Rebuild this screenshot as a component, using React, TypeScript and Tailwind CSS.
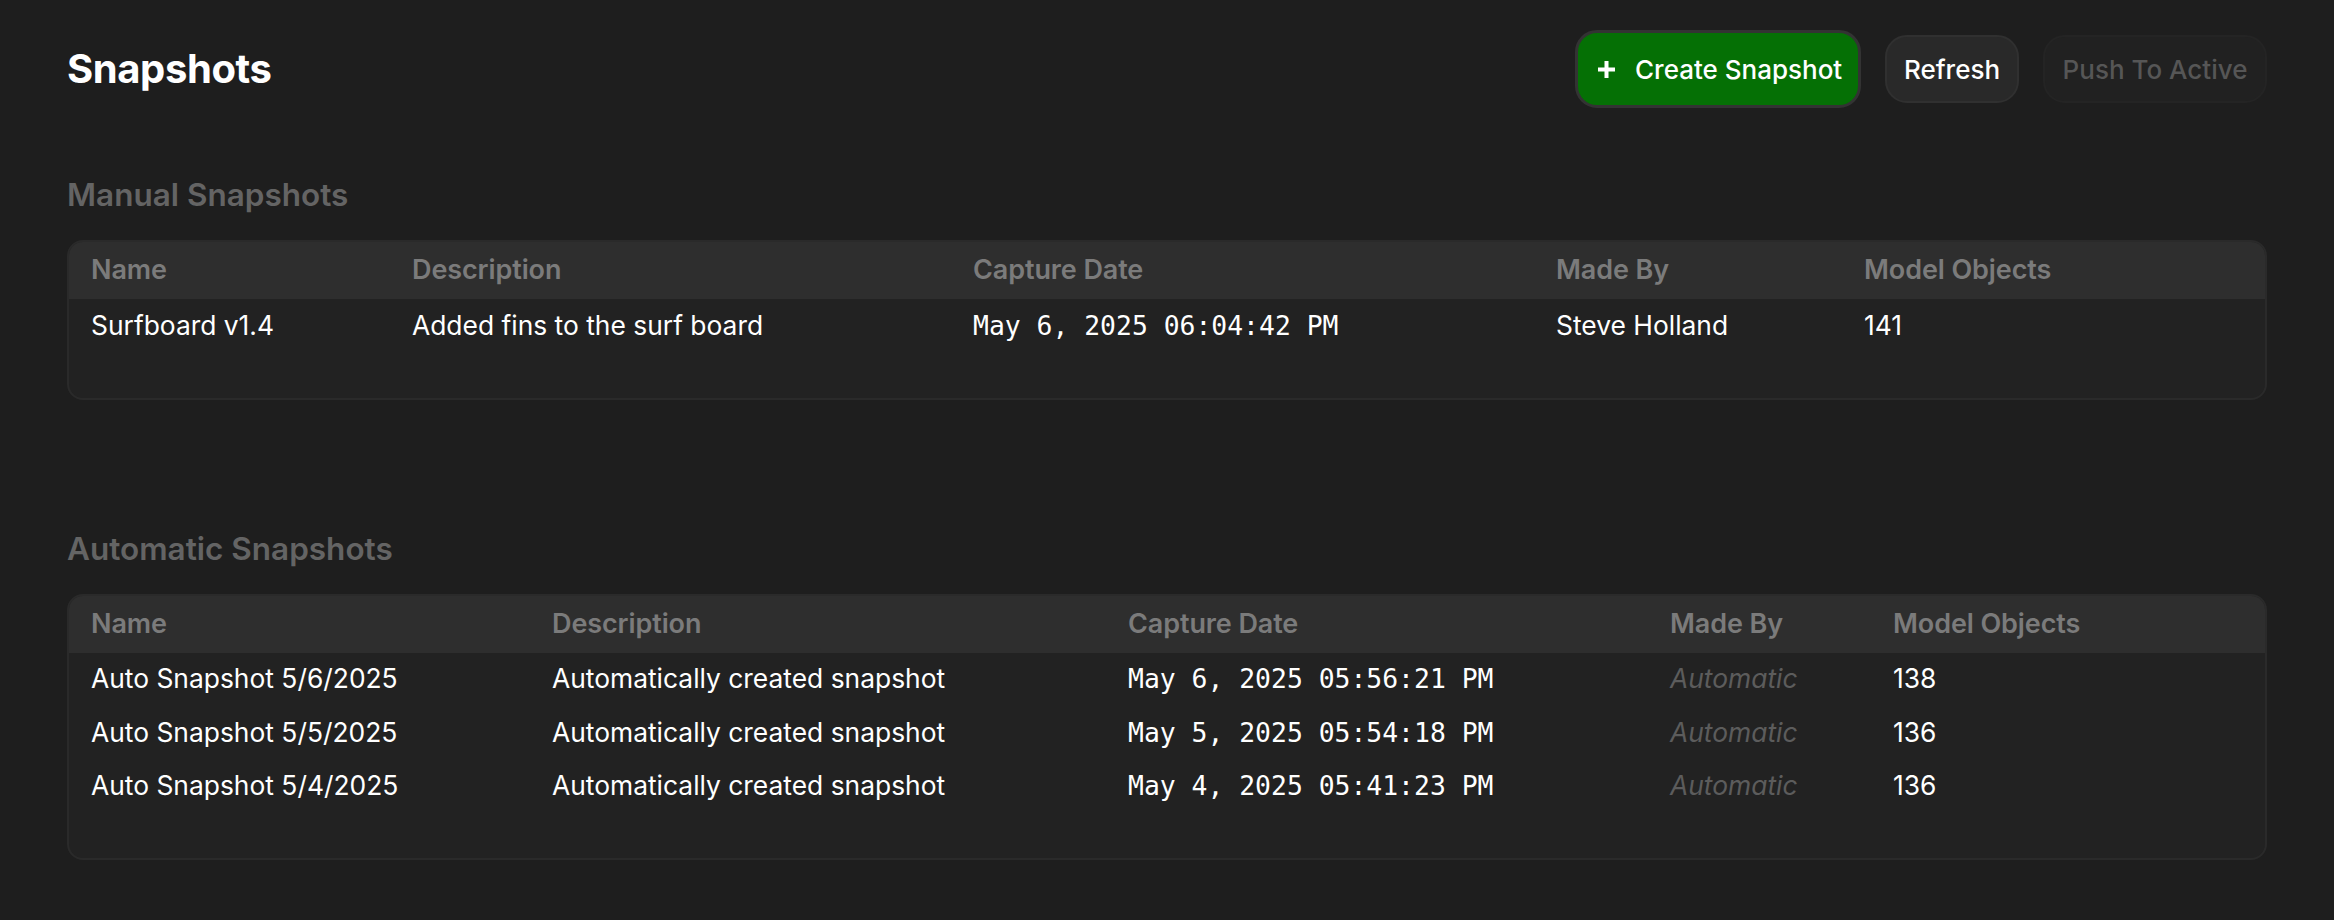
import React from "react";

type Row = { name: string; desc: string; date: string; by: string; auto?: boolean; count: string };

const manual: Row[] = [
  { name: "Surfboard v1.4", desc: "Added fins to the surf board", date: "May 6, 2025 06:04:42 PM", by: "Steve Holland", count: "141" },
];

const automatic: Row[] = [
  { name: "Auto Snapshot 5/6/2025", desc: "Automatically created snapshot", date: "May 6, 2025 05:56:21 PM", by: "Automatic", auto: true, count: "138" },
  { name: "Auto Snapshot 5/5/2025", desc: "Automatically created snapshot", date: "May 5, 2025 05:54:18 PM", by: "Automatic", auto: true, count: "136" },
  { name: "Auto Snapshot 5/4/2025", desc: "Automatically created snapshot", date: "May 4, 2025 05:41:23 PM", by: "Automatic", auto: true, count: "136" },
];

function SnapTable({ rows, widths }: { rows: Row[]; widths: number[] }) {
  return (
    <div className="rounded-[16px] border-2 border-[#2a2a2a] bg-[#222222] overflow-hidden pb-[45px]">
      <table className="w-full table-fixed border-collapse">
        <colgroup>
          {widths.map((w, i) => (
            <col key={i} style={{ width: w }} />
          ))}
          <col />
        </colgroup>
        <thead>
          <tr className="bg-[#2e2e2e] h-[57px]">
            {["Name", "Description", "Capture Date", "Made By", "Model Objects"].map((h) => (
              <th key={h} className="text-left pl-[22px] text-[27px] font-semibold text-[#7b7b7b] tracking-[-0.1px]">
                {h}
              </th>
            ))}
          </tr>
        </thead>
        <tbody>
          {rows.map((r) => (
            <tr key={r.name} className="h-[53.5px] text-[26.4px] text-white">
              <td className="pl-[22px]">{r.name}</td>
              <td className="pl-[22px]">{r.desc}</td>
              <td className="pl-[22px] font-['DejaVu_Sans_Mono',monospace] text-[26.4px]">{r.date}</td>
              <td className={r.auto ? "pl-[22px] italic text-[#5c5c5c]" : "pl-[22px]"}>{r.by}</td>
              <td className="pl-[22px]">{r.count}</td>
            </tr>
          ))}
        </tbody>
      </table>
    </div>
  );
}

export default function App() {
  return (
    <div className="min-h-[920px] w-full bg-[#1e1e1e] font-['Inter',sans-serif] px-[67px] pt-[30px] pb-[40px]">
      <div className="flex items-center justify-between h-[78px]">
        <h1 className="text-[40px] font-bold text-white tracking-[-0.4px] leading-none">Snapshots</h1>
        <div className="flex items-center gap-[24px]">
          <button className="h-[78px] w-[286px] rounded-[22px] border-[3px] border-[#333333] bg-[#057005] text-white text-[26px] font-medium flex items-center pl-[20px] gap-[20px]">
            <svg width="17" height="17" viewBox="0 0 17 17" className="shrink-0">
              <rect x="6.5" y="0" width="4" height="17" fill="#ffffff" />
              <rect x="0" y="6.5" width="17" height="4" fill="#ffffff" />
            </svg>
            <span>Create Snapshot</span>
          </button>
          <button className="h-[68px] w-[134px] rounded-[22px] border-2 border-[#303030] bg-[#292929] text-white text-[26px] font-medium">
            Refresh
          </button>
          <button className="h-[68px] w-[224px] rounded-[22px] border-2 border-[#242424] bg-[#212121] text-[#565656] text-[26px] font-medium">
            Push To Active
          </button>
        </div>
      </div>

      <h2 className="mt-[68px] text-[31.5px] leading-[38px] font-semibold text-[#646464]">Manual Snapshots</h2>
      <div className="mt-[26px]">
        <SnapTable rows={manual} widths={[321, 561, 583, 308]} />
      </div>

      <h2 className="mt-[130px] text-[31.5px] leading-[38px] font-semibold text-[#646464]">Automatic Snapshots</h2>
      <div className="mt-[26px]">
        <SnapTable rows={automatic} widths={[461, 576, 542, 223]} />
      </div>
    </div>
  );
}
